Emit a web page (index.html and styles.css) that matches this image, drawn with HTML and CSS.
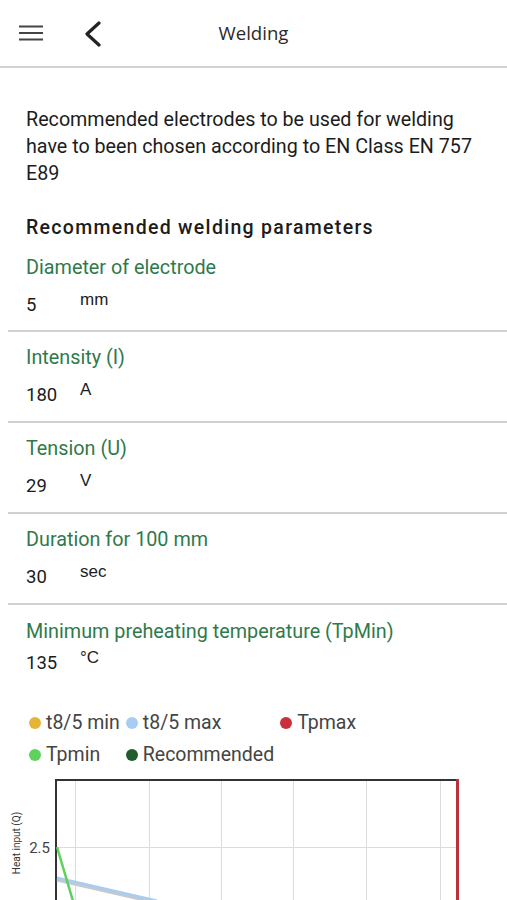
FILE: index.html
```html
<!DOCTYPE html>
<html>
<head>
<meta charset="utf-8">
<link rel="stylesheet" href="styles.css">
</head>
<body>
<header class="topbar">
  <button class="icon-btn menu" aria-label="Menu">
    <svg width="26" height="20" viewBox="0 0 26 20"><path d="M1 3.5H25M1 10H25M1 16.5H25" stroke="#444" stroke-width="2.2" fill="none"/></svg>
  </button>
  <button class="icon-btn back" aria-label="Back">
    <svg width="18" height="26" viewBox="0 0 18 26"><path d="M15 2L3 13L15 24" stroke="#222" stroke-width="3.2" fill="none" stroke-linecap="round" stroke-linejoin="round"/></svg>
  </button>
  <h1 class="title">Welding</h1>
</header>

<main class="content">
  <p class="intro">Recommended electrodes to be used for welding have to been chosen according to EN Class EN 757 E89</p>
  <h2 class="section-title">Recommended welding parameters</h2>

  <div class="params">
    <div class="param">
      <div class="param-label">Diameter of electrode</div>
      <div class="param-value"><span class="num">5</span><span class="unit">mm</span></div>
    </div>
    <div class="param">
      <div class="param-label">Intensity (I)</div>
      <div class="param-value"><span class="num">180</span><span class="unit">A</span></div>
    </div>
    <div class="param">
      <div class="param-label">Tension (U)</div>
      <div class="param-value"><span class="num">29</span><span class="unit">V</span></div>
    </div>
    <div class="param">
      <div class="param-label">Duration for 100 mm</div>
      <div class="param-value"><span class="num">30</span><span class="unit">sec</span></div>
    </div>
    <div class="param last">
      <div class="param-label">Minimum preheating temperature (TpMin)</div>
      <div class="param-value"><span class="num">135</span><span class="unit">°C</span></div>
    </div>
  </div>

  <div class="legend">
    <span class="legend-item"><i class="dot yellow"></i>t8/5 min</span>
    <span class="legend-item"><i class="dot lightblue"></i>t8/5 max</span>
    <span class="legend-item"><i class="dot red"></i>Tpmax</span>
    <span class="legend-item"><i class="dot green"></i>Tpmin</span>
    <span class="legend-item"><i class="dot darkgreen"></i>Recommended</span>
  </div>
</main>

<div class="chart">
  <svg width="507" height="130" viewBox="0 0 507 130">
    <g stroke="#dcdcdc" stroke-width="1">
      <line x1="75.5" y1="9" x2="75.5" y2="130"/>
      <line x1="149.5" y1="9" x2="149.5" y2="130"/>
      <line x1="221.5" y1="9" x2="221.5" y2="130"/>
      <line x1="293.5" y1="9" x2="293.5" y2="130"/>
      <line x1="366.5" y1="9" x2="366.5" y2="130"/>
      <line x1="440.5" y1="9" x2="440.5" y2="130"/>
      <line x1="56" y1="76.5" x2="457" y2="76.5"/>
    </g>
    <line x1="56" y1="9" x2="459" y2="9" stroke="#333" stroke-width="2"/>
    <line x1="56" y1="8" x2="56" y2="130" stroke="#333" stroke-width="2"/>
    <line x1="457.5" y1="8" x2="457.5" y2="130" stroke="#b8333b" stroke-width="3"/>
    <line x1="57" y1="109" x2="157" y2="132" stroke="#c9c9c9" stroke-width="3"/>
    <line x1="57" y1="107" x2="157" y2="130" stroke="#a9ccef" stroke-width="3"/>
    <line x1="57" y1="76" x2="73" y2="130" stroke="#5fcf5f" stroke-width="2.5"/>
    <text class="axis-num" x="50" y="82" text-anchor="end">2.5</text>
    <text class="axis-title" transform="translate(20 72) rotate(-90)" text-anchor="middle">Heat input (Q)</text>
  </svg>
</div>
</body>
</html>
```

FILE: styles.css
```css
* { box-sizing: border-box; }
html, body { margin: 0; padding: 0; background: #fff; }
body {
  width: 507px;
  height: 900px;
  overflow: hidden;
  font-family: Roboto, "Noto Sans", sans-serif;
  color: #1c1c1c;
}

.topbar {
  position: relative;
  height: 68px;
  border-bottom: 2px solid #d2d2d2;
  display: flex;
  align-items: center;
}
.icon-btn {
  border: 0;
  background: none;
  padding: 0;
  display: flex;
  align-items: center;
  justify-content: center;
}
.menu { margin-left: 18px; margin-top: -1px; }
.back { margin-left: 40px; margin-top: 1px; }
.title {
  position: absolute;
  left: 0;
  right: 0;
  top: 0;
  bottom: 0;
  margin: 0;
  display: flex;
  align-items: center;
  justify-content: center;
  font-family: "Open Sans", sans-serif;
  font-weight: 400;
  font-size: 18.6px;
  color: #2a2a2a;
  pointer-events: none;
  padding-bottom: 1px;
}

.content { padding: 38px 0 0 0; }
.intro {
  margin: 0 26px;
  font-size: 19.7px;
  line-height: 27px;
  color: #1c1c1c;
}
.section-title {
  margin: 27px 26px 0;
  font-size: 19.5px;
  font-weight: 500;
  letter-spacing: 1.3px;
  line-height: 28px;
  color: #1c1c1c;
}

.params { margin-left: 8px; margin-top: 12px; }
.param {
  padding: 0 0 11px 18px;
  border-bottom: 2px solid #d0d0d0;
}
.param:first-child { padding-bottom: 10px; }
.param + .param { padding-top: 12px; }
.param.last { border-bottom: 0; padding-bottom: 0; padding-top: 13px; }
.param-label {
  font-size: 19.8px;
  line-height: 28px;
  color: #2f7a4b;
}
.param-value {
  display: flex;
  align-items: flex-start;
  margin-top: 10px;
  height: 28px;
}
.param.last .param-value { margin-top: 4px; }
.num {
  width: 54px;
  font-size: 18.5px;
  line-height: 28px;
  margin-top: -1px;
  color: #1c1c1c;
}
.unit {
  font-family: "Liberation Sans", Arial, sans-serif;
  font-size: 17px;
  line-height: 24px;
  margin-top: -4px;
  color: #1c1c1c;
}

.legend {
  margin: 29px 0 0 29px;
  display: grid;
  grid-template-columns: repeat(3, auto);
  justify-content: start;
  column-gap: 6px;
  font-size: 19.5px;
  line-height: 32px;
  color: #444;
}
.legend-item { display: flex; align-items: center; }
.dot {
  width: 12px;
  height: 12px;
  border-radius: 50%;
  margin-right: 5px;
  display: inline-block;
}
.yellow { background: #e7b43a; }
.lightblue { background: #a8cdf2; }
.red { background: #c9303a; }
.green { background: #5dd35d; }
.darkgreen { background: #1f5e2c; }

.chart { height: 130px; }
.chart svg { display: block; }
.axis-num { font-family: Roboto, sans-serif; font-size: 15px; fill: #444; }
.axis-title { font-family: Roboto, sans-serif; font-size: 10px; fill: #333; }
```
